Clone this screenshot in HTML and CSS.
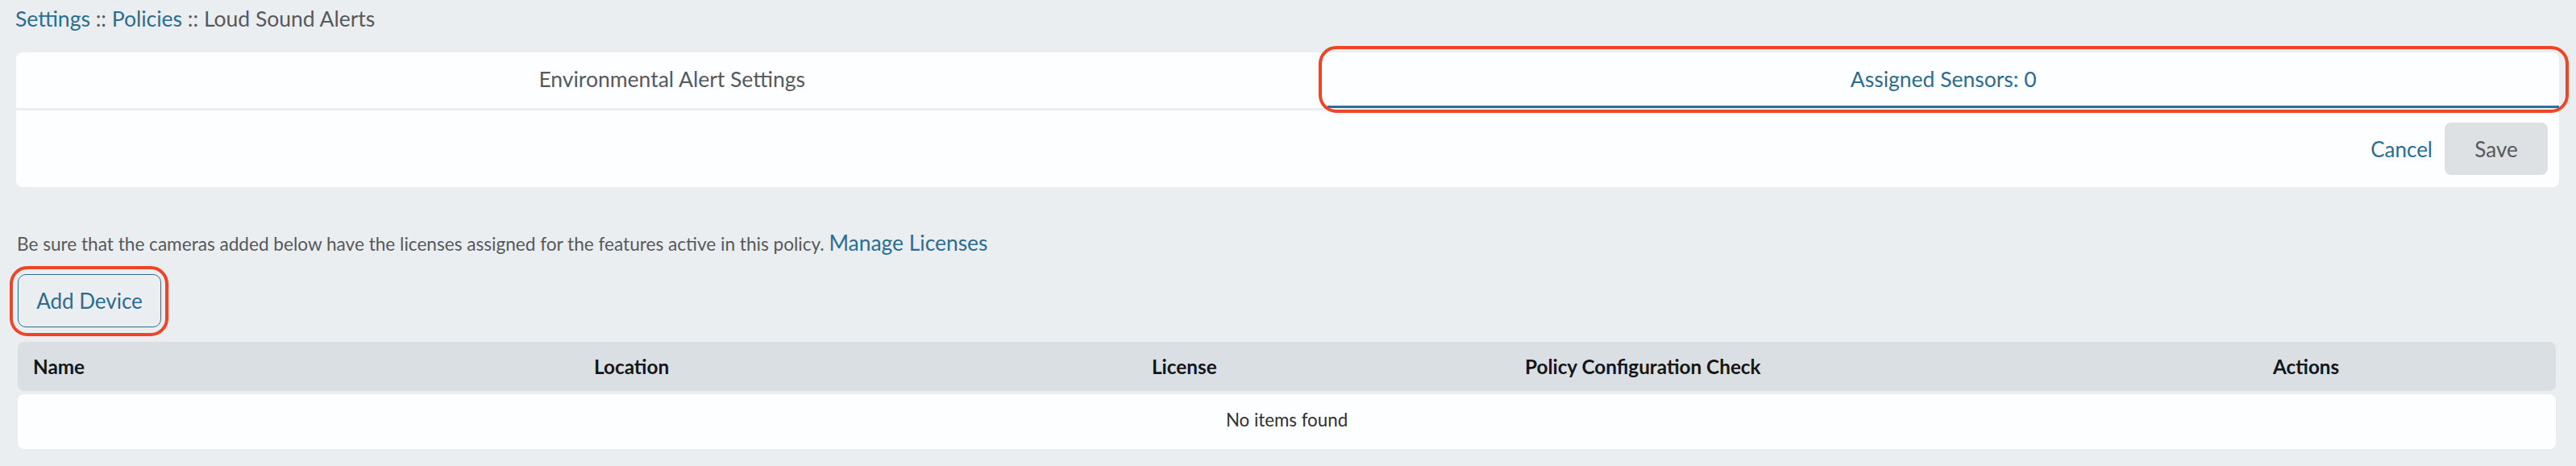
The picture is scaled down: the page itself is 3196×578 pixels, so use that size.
FILE: index.html
```html
<!DOCTYPE html>
<html lang="en">
<head>
  <meta charset="UTF-8">
  <meta name="viewport" content="width=device-width, initial-scale=1.0">
  <title>Loud Sound Alerts</title>
  <link rel="stylesheet" href="styles.css">
</head>
<body>
<div class="crumbs">
  <a href="#">Settings</a> :: <a href="#">Policies</a> :: Loud Sound Alerts
</div>

<div class="card">
  <div class="tabs">
    <div class="tab">Environmental Alert Settings</div>
    <div class="tab active marked">Assigned Sensors: 0</div>
  </div>
  <div class="card-footer">
    <a href="#" class="link">Cancel</a>
    <button class="btn-save" disabled>Save</button>
  </div>
</div>

<div class="devices">
  <p class="note">Be sure that the cameras added below have the licenses assigned for the features active in this policy. <a href="#" class="link">Manage Licenses</a></p>
  <button class="btn-add marked">Add Device</button>

  <div class="grid-head">
    <div>Name</div>
    <div>Location</div>
    <div>License</div>
    <div>Policy Configuration Check</div>
    <div>Actions</div>
  </div>
  <div class="grid-empty">No items found</div>
</div>
</body>
</html>
```
FILE: styles.css
```css
body {
  margin: 0;
  background: #ebeef1;
  font-family: Lato, "Open Sans", sans-serif;
  color: #55595d;
}
a { color: #2a6d93; text-decoration: none; }

.crumbs {
  padding: 7px 0 0 19px;
  font-size: 26.5px;
  line-height: 32px;
}

.card {
  margin: 26px 21px 0 20px;
  background: #fdfeff;
  border-radius: 8px;
}
.tabs {
  display: flex;
  border-bottom: 3px solid #eceff2;
}
.tab {
  flex: 1 1 auto;
  text-align: center;
  font-size: 26.5px;
  line-height: 66px;
  padding-bottom: 3px;
  color: #55595d;
}
.tab.active {
  color: #2a6d93;
  border-bottom: 3px solid #2d6f96;
  margin-bottom: -3px;
  padding-bottom: 0;
  height: 66px;
}
.card-footer {
  display: flex;
  justify-content: flex-end;
  align-items: center;
  gap: 15px;
  padding: 15px 14px;
}
.link { font-size: 26px; }
.btn-save {
  width: 128px;
  height: 65px;
  border: none;
  border-radius: 8px;
  background: #dee1e4;
  color: #55595d;
  font: 26px Lato, sans-serif;
}

/* red call-out ring drawn round an element */
.marked { position: relative; }
.marked::after {
  content: "";
  position: absolute;
  top: -8px;
  left: -11px;
  right: -12px;
  bottom: -9px;
  border: 4px solid #ee4527;
  border-radius: 22px;
  pointer-events: none;
}

.devices {
  padding: 0 25px 0 22px;
}
.note {
  margin: 56px 0 0 -1px;
  font-size: 22.6px;
  line-height: 27px;
}
.note .link { font-size: 26.4px; }
.btn-add {
  display: block;
  margin-top: 24px;
  width: 178px;
  height: 66px;
  border: 1.5px solid #2e6e94;
  border-radius: 10px;
  background: transparent;
  color: #2a6d93;
  font: 26px Lato, sans-serif;
}
.btn-add.marked::after {
  top: -11px;
  left: -11px;
  right: -10px;
  bottom: -12px;
}

.grid-head {
  display: grid;
  grid-template-columns: 696fr 692fr 463fr 928fr 370fr;
  margin-top: 18px;
  background: #dadfe3;
  border-radius: 8px;
  font-weight: bold;
  font-size: 24.3px;
  line-height: 61px;
  color: #141618;
}
.grid-head div { padding-left: 19px; }
.grid-empty {
  margin-top: 4px;
  background: #fdfeff;
  border-radius: 8px;
  text-align: center;
  font-size: 22.3px;
  line-height: 64px;
  padding-bottom: 4px;
  color: #2e3134;
}
```
